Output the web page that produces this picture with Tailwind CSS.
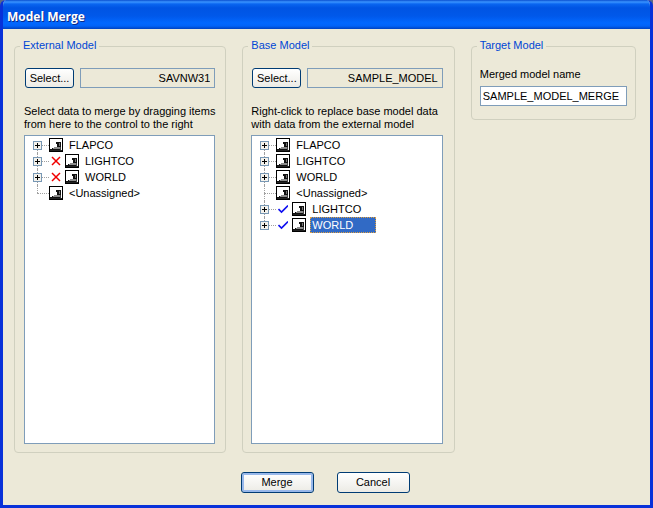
<!DOCTYPE html>
<html lang="en">
<head>
<meta charset="utf-8">
<title>Model Merge</title>
<script src="https://cdn.jsdelivr.net/npm/@tailwindcss/browser@4"></script>
</head>
<body class="bg-[#5a6a86] font-['Liberation_Sans',Arial,sans-serif] text-[11px] leading-[13px] text-black">
<svg class="hidden" aria-hidden="true">
  <symbol id="machine" viewBox="0 0 14 14" shape-rendering="crispEdges">
    <rect width="14" height="14" fill="#000"/>
    <rect x="1" y="1" width="12" height="12" fill="#fff"/>
    <path d="M7 4h5v5h-1v3H1v-1h2v-1h2V9h3V6H7z" fill="#111"/>
    <path d="M10 5h1v3h-1z" fill="#777"/>
    <path d="M5 9h6v2H4v-1h1z" fill="#8c8c8c"/>
    <path d="M11 9h1v3h-1z" fill="#444"/>
    <path d="M1 12h12v1H1z" fill="#222"/>
  </symbol>
  <symbol id="plus" viewBox="0 0 9 9" shape-rendering="crispEdges">
    <rect x=".5" y=".5" width="8" height="8" fill="#f4f2ec" stroke="#7898b5"/>
    <path d="M2 4h5v1H2zM4 2h1v5H4z" fill="#000"/>
  </symbol>
  <symbol id="cross" viewBox="0 0 10 10">
    <path d="M1 1l8 8M9 1L1 9" stroke="#f00000" stroke-width="1.5" fill="none"/>
  </symbol>
  <symbol id="check" viewBox="0 0 10 10">
    <path d="M.5 5L3.5 8L10 1.5" stroke="#1010f0" stroke-width="1.6" fill="none"/>
  </symbol>
</svg>
<main class="flex min-h-screen flex-col overflow-hidden rounded-t-[6px] border-x-3 border-b-3 border-[#0831d9] bg-[#ece9d8]">
  <header class="-mx-[3px] flex h-[29px] items-center bg-[linear-gradient(#0a4fd0_0,#3a94ff_2px,#0a66f0_4px,#0054e3_8px,#0058ea_16px,#0268ff_23px,#0263f8_26px,#0042c0_29px)] px-[7px] pt-1">
    <h1 class="font-['Open_Sans',sans-serif] text-[12px] font-bold text-white [text-shadow:1px_1px_0_#0a2a88]">Model Merge</h1>
  </header>
  <form class="flex flex-1 flex-col pt-[10px] pr-[14px] pb-3 pl-[11px]">
    <div class="grid flex-1 grid-cols-[212fr_212fr_165fr] gap-4">
      <fieldset class="flex min-w-0 flex-col rounded border border-[#d0d0bf] pr-[10px] pb-2 pl-[9px]">
        <legend class="-ml-1 h-[14px] px-[3px] text-[#0046d5]">External Model</legend>
        <div class="flex flex-1 flex-col pt-[15px]">
          <div class="flex gap-[6px]">
            <button type="button" class="ml-px h-5 w-[49px] rounded-[3px] border border-[#003c74] bg-linear-to-b from-white to-[#ecebe5]">Select...</button>
            <input readonly aria-label="External model" value="SAVNW31" class="h-5 min-w-0 flex-1 border border-[#7f9db9] bg-transparent px-1 text-right">
          </div>
          <p class="mt-[17px] whitespace-nowrap">Select data to merge by dragging items<br>from here to the control to the right</p>
          <ul class="mt-1 flex-1 border border-[#7f9db9] bg-white pt-px pl-2">
            <li class="relative flex h-4 items-center before:absolute before:top-2 before:bottom-0 before:left-1 before:border-l before:border-dotted before:border-[#a0a0a0]"><svg class="relative size-[9px]"><use href="#plus"/></svg><span class="w-[7px] border-t border-dotted border-[#a0a0a0]"></span><svg class="size-[14px]"><use href="#machine"/></svg><span class="pl-[6px]">FLAPCO</span></li>
            <li class="relative flex h-4 items-center before:absolute before:inset-y-0 before:left-1 before:border-l before:border-dotted before:border-[#a0a0a0]"><svg class="relative size-[9px]"><use href="#plus"/></svg><span class="w-[7px] border-t border-dotted border-[#a0a0a0]"></span><svg class="mx-[2px] size-[10px]"><use href="#cross"/></svg><svg class="ml-[2px] size-[14px]"><use href="#machine"/></svg><span class="pl-[6px]">LIGHTCO</span></li>
            <li class="relative flex h-4 items-center before:absolute before:inset-y-0 before:left-1 before:border-l before:border-dotted before:border-[#a0a0a0]"><svg class="relative size-[9px]"><use href="#plus"/></svg><span class="w-[7px] border-t border-dotted border-[#a0a0a0]"></span><svg class="mx-[2px] size-[10px]"><use href="#cross"/></svg><svg class="ml-[2px] size-[14px]"><use href="#machine"/></svg><span class="pl-[6px]">WORLD</span></li>
            <li class="relative flex h-4 items-center before:absolute before:top-0 before:bottom-2 before:left-1 before:border-l before:border-dotted before:border-[#a0a0a0]"><span class="ml-1 w-3 border-t border-dotted border-[#a0a0a0]"></span><svg class="size-[14px]"><use href="#machine"/></svg><span class="pl-[6px]">&lt;Unassigned&gt;</span></li>
          </ul>
        </div>
      </fieldset>
      <fieldset class="flex min-w-0 flex-col rounded border border-[#d0d0bf] pr-[11px] pb-2 pl-2">
        <legend class="-ml-[3px] h-[14px] px-[3px] text-[#0046d5]">Base Model</legend>
        <div class="flex flex-1 flex-col pt-[15px]">
          <div class="flex gap-[6px]">
            <button type="button" class="ml-px h-5 w-[49px] rounded-[3px] border border-[#003c74] bg-linear-to-b from-white to-[#ecebe5]">Select...</button>
            <input readonly aria-label="Base model" value="SAMPLE_MODEL" class="h-5 min-w-0 flex-1 border border-[#7f9db9] bg-transparent px-1 text-right">
          </div>
          <p class="mt-[17px] whitespace-nowrap">Right-click to replace base model data<br>with data from the external model</p>
          <ul class="mt-1 flex-1 border border-[#7f9db9] bg-white pt-px pl-2">
            <li class="relative flex h-4 items-center before:absolute before:top-2 before:bottom-0 before:left-1 before:border-l before:border-dotted before:border-[#a0a0a0]"><svg class="relative size-[9px]"><use href="#plus"/></svg><span class="w-[7px] border-t border-dotted border-[#a0a0a0]"></span><svg class="size-[14px]"><use href="#machine"/></svg><span class="pl-[6px]">FLAPCO</span></li>
            <li class="relative flex h-4 items-center before:absolute before:inset-y-0 before:left-1 before:border-l before:border-dotted before:border-[#a0a0a0]"><svg class="relative size-[9px]"><use href="#plus"/></svg><span class="w-[7px] border-t border-dotted border-[#a0a0a0]"></span><svg class="size-[14px]"><use href="#machine"/></svg><span class="pl-[6px]">LIGHTCO</span></li>
            <li class="relative flex h-4 items-center before:absolute before:inset-y-0 before:left-1 before:border-l before:border-dotted before:border-[#a0a0a0]"><svg class="relative size-[9px]"><use href="#plus"/></svg><span class="w-[7px] border-t border-dotted border-[#a0a0a0]"></span><svg class="size-[14px]"><use href="#machine"/></svg><span class="pl-[6px]">WORLD</span></li>
            <li class="relative flex h-4 items-center before:absolute before:inset-y-0 before:left-1 before:border-l before:border-dotted before:border-[#a0a0a0]"><span class="ml-1 w-3 border-t border-dotted border-[#a0a0a0]"></span><svg class="size-[14px]"><use href="#machine"/></svg><span class="pl-[6px]">&lt;Unassigned&gt;</span></li>
            <li class="relative flex h-4 items-center before:absolute before:inset-y-0 before:left-1 before:border-l before:border-dotted before:border-[#a0a0a0]"><svg class="relative size-[9px]"><use href="#plus"/></svg><span class="w-[7px] border-t border-dotted border-[#a0a0a0]"></span><svg class="mx-[2px] size-[10px]"><use href="#check"/></svg><svg class="ml-[2px] size-[14px]"><use href="#machine"/></svg><span class="pl-[6px]">LIGHTCO</span></li>
            <li class="relative flex h-4 items-center before:absolute before:top-0 before:bottom-2 before:left-1 before:border-l before:border-dotted before:border-[#a0a0a0]"><svg class="relative size-[9px]"><use href="#plus"/></svg><span class="w-[7px] border-t border-dotted border-[#a0a0a0]"></span><svg class="mx-[2px] size-[10px]"><use href="#check"/></svg><svg class="ml-[2px] size-[14px]"><use href="#machine"/></svg><span class="ml-1 flex h-4 w-[66px] items-center border border-dotted border-[#e0a040] bg-[#316ac5] pl-px text-white">WORLD</span></li>
          </ul>
        </div>
      </fieldset>
      <fieldset class="min-w-0 self-start rounded border border-[#d0d0bf] px-2 pb-[13px]">
        <legend class="-ml-[3px] h-[14px] px-[3px] text-[#0046d5]">Target Model</legend>
        <label for="merged" class="block pt-[15px]">Merged model name</label>
        <input id="merged" value="SAMPLE_MODEL_MERGE" class="mt-[5px] block h-5 w-full border border-[#7f9db9] bg-white px-[2px]">
      </fieldset>
    </div>
    <div class="flex justify-center gap-[23px] pt-[19px]">
      <button type="submit" class="h-[21px] w-[73px] rounded-[3px] border border-[#003c74] bg-linear-to-b from-white to-[#ecebe5] shadow-[inset_0_0_0_2px_#98b8ea]">Merge</button>
      <button type="button" class="h-[21px] w-[73px] rounded-[3px] border border-[#003c74] bg-linear-to-b from-white to-[#ecebe5]">Cancel</button>
    </div>
  </form>
</main>
</body>
</html>
